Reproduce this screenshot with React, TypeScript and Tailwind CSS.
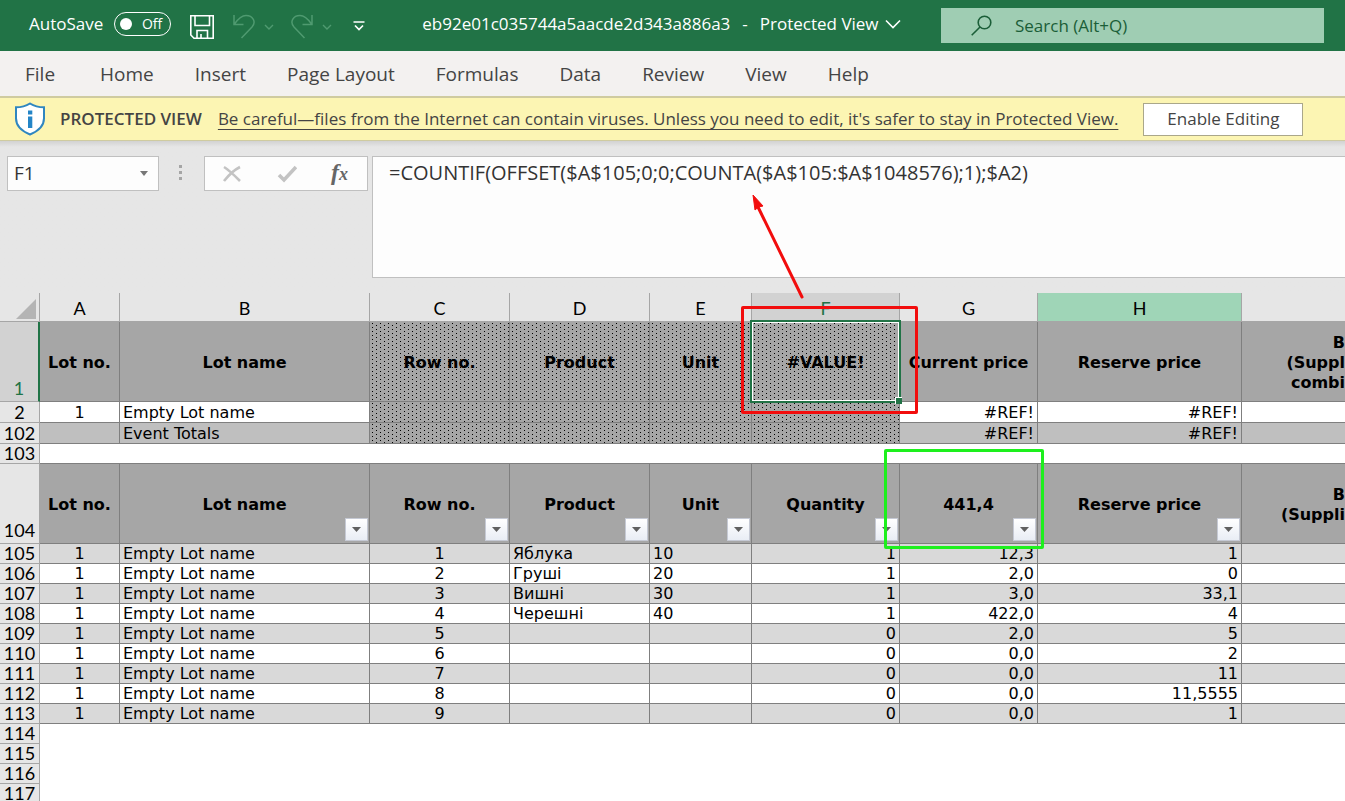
import type { ReactNode } from 'react';

type Align = 'left' | 'center' | 'right';

interface DataRow {
  row: number;
  rowNo: string;
  product: string;
  unit: string;
  quantity: string;
  current: string;
  reserve: string;
}

const tabs = ['Home', 'Insert', 'Page Layout', 'Formulas', 'Data', 'Review', 'View', 'Help'];

const columns = ['A', 'B', 'C', 'D', 'E', 'F', 'G', 'H', ''];

const dataRows: DataRow[] = [
  { row: 105, rowNo: '1', product: 'Яблука', unit: '10', quantity: '1', current: '12,3', reserve: '1' },
  { row: 106, rowNo: '2', product: 'Груші', unit: '20', quantity: '1', current: '2,0', reserve: '0' },
  { row: 107, rowNo: '3', product: 'Вишні', unit: '30', quantity: '1', current: '3,0', reserve: '33,1' },
  { row: 108, rowNo: '4', product: 'Черешні', unit: '40', quantity: '1', current: '422,0', reserve: '4' },
  { row: 109, rowNo: '5', product: '', unit: '', quantity: '0', current: '2,0', reserve: '5' },
  { row: 110, rowNo: '6', product: '', unit: '', quantity: '0', current: '0,0', reserve: '2' },
  { row: 111, rowNo: '7', product: '', unit: '', quantity: '0', current: '0,0', reserve: '11' },
  { row: 112, rowNo: '8', product: '', unit: '', quantity: '0', current: '0,0', reserve: '11,5555' },
  { row: 113, rowNo: '9', product: '', unit: '', quantity: '0', current: '0,0', reserve: '1' },
];

const emptyRows = [114, 115, 116, 117];

const alignClass: Record<Align, string> = {
  left: 'text-left pl-[3px]',
  center: 'text-center',
  right: 'text-right pr-[3px]',
};

function Chevron({ className }: { className?: string }) {
  return (
    <svg viewBox="0 0 10 6" className={className} fill="none" stroke="currentColor" strokeWidth="1.4" aria-hidden>
      <path d="M1 1l4 4 4-4" />
    </svg>
  );
}

function TitleBar() {
  return (
    <header className="flex h-[51px] items-center bg-[#217346] pr-[21px] pb-[3px] pl-[29px] text-white">
      <label className="flex items-center gap-[11px] text-[17px]">
        AutoSave
        <input type="checkbox" className="peer sr-only" />
        <span className="flex h-6 w-[57px] items-center justify-between rounded-full border border-white pr-2 pl-[5px] text-sm">
          <span className="size-3 rounded-full bg-white" />
          Off
        </span>
      </label>
      <button type="button" aria-label="Save" className="ml-[19px] pt-[6px]">
        <svg viewBox="0 0 24 24" className="size-6" fill="none" stroke="currentColor" strokeWidth="1.6" aria-hidden>
          <path d="M.8.8h22.4v22.4H4L.8 20z" />
          <path d="M5 1v9.500h14.500V1M7 23v-7.500h10.500V23M11 23v-4" />
        </svg>
      </button>
      <button type="button" aria-label="Undo" className="ml-[18px] flex items-center gap-2 pt-[6px] text-[#4f9a70]">
        <svg viewBox="0 0 24 26" className="h-[26px] w-6" fill="none" stroke="currentColor" strokeWidth="1.5" aria-hidden>
          <path d="M2 1v9.500h9.500M2.500 10C6 5 9 1.500 14 1.500c7 0 10.500 6.500 6 11.500L9.500 24" />
        </svg>
        <Chevron className="h-[6px] w-[10px]" />
      </button>
      <button type="button" aria-label="Redo" className="ml-4 flex items-center gap-2 pt-[6px] text-[#4f9a70]">
        <svg viewBox="0 0 24 26" className="h-[26px] w-6" fill="none" stroke="currentColor" strokeWidth="1.5" aria-hidden>
          <path d="M22 1v9.500h-9.500M21.500 10C18 5 15 1.500 10 1.500c-7 0-10.500 6.500-6 11.500L14.500 24" />
        </svg>
        <Chevron className="h-[6px] w-[10px]" />
      </button>
      <button type="button" aria-label="Customize Quick Access Toolbar" className="ml-[21px] pt-1">
        <svg viewBox="0 0 12 10" className="h-[10px] w-3" fill="none" stroke="currentColor" strokeWidth="1.7" aria-hidden>
          <path d="M.5 1h11M2 4.500l4 4 4-4" />
        </svg>
      </button>
      <h1 className="ml-[57px] flex items-center gap-3 text-[17px] whitespace-nowrap">
        <span>eb92e01c035744a5aacde2d343a886a3</span>
        <span>-</span>
        <span className="flex items-center gap-[6px]">
          Protected View
          <svg viewBox="0 0 16 10" className="h-[10px] w-4" fill="none" stroke="currentColor" strokeWidth="1.6" aria-hidden>
            <path d="M1 1.500l7 7 7-7" />
          </svg>
        </span>
      </h1>
      <label className="mt-[3px] ml-auto flex h-[35px] w-[383px] items-center bg-[#9fcdb3] pl-[30px] text-[#1b5e38]">
        <svg viewBox="0 0 22 22" className="size-[22px] shrink-0" fill="none" stroke="currentColor" strokeWidth="1.6" aria-hidden>
          <circle cx="13.5" cy="7.5" r="6.3" />
          <path d="M9 12l-8.300 8.300" />
        </svg>
        <input
          type="search"
          aria-label="Search"
          placeholder="Search (Alt+Q)"
          className="ml-[22px] w-full min-w-0 bg-transparent text-[17px] outline-none placeholder:text-[#1b5e38] placeholder:opacity-100"
        />
      </label>
    </header>
  );
}

function RibbonTabs() {
  return (
    <nav className="flex h-[45px] items-center bg-[#f3f1f0] px-[25px] pt-px text-[19px] text-[#444]" aria-label="Ribbon">
      <button type="button" className="mr-[45px]">
        File
      </button>
      <div className="flex gap-[41px]">
        {tabs.map((tab) => (
          <button key={tab} type="button" className="whitespace-nowrap">
            {tab}
          </button>
        ))}
      </div>
    </nav>
  );
}

function ProtectedBanner() {
  return (
    <div className="flex h-[45px] items-center border-t-2 border-b border-[#cfcba0] bg-[#fcf5b3] pl-[14px] text-[17px] text-[#444]">
      <svg viewBox="0 0 32 34" className="h-[34px] w-8 shrink-0" aria-hidden>
        <path
          d="M16 1.500c4 2.500 9 3.800 14 3.800v11c0 8-6 13-14 16.200C8 29.300 2 24.300 2 16.300v-11c5 0 10-1.300 14-3.800z"
          fill="#fff"
          stroke="#2f86c0"
          strokeWidth="2"
        />
        <path d="M14 8.500h4.300v4H14zM14 14.500h4.300V26H14z" fill="#2485c7" />
      </svg>
      <strong className="ml-[14px] font-semibold whitespace-nowrap">PROTECTED VIEW</strong>
      <a href="#protected-view" className="ml-4 whitespace-nowrap underline underline-offset-4">
        Be careful—files from the Internet can contain viruses. Unless you need to edit, it's safer to stay in Protected View.
      </a>
      <button type="button" className="ml-[25px] h-[33px] w-40 shrink-0 border border-[#aaa78a] bg-white">
        Enable Editing
      </button>
    </div>
  );
}

function FormulaBar() {
  return (
    <section
      className="flex h-[152px] items-start bg-linear-to-b from-[#d2d2d2] to-[#e6e6e6] to-[6px] pt-[15px] pl-[7px] text-[#333]"
      aria-label="Formula bar"
    >
      <div className="flex h-[35px] w-[152px] items-center border border-[#c0c0c0] bg-[#fdfdfd]">
        <input
          aria-label="Name box"
          defaultValue="F1"
          className="w-full min-w-0 bg-transparent pl-[6px] text-[19px] outline-none"
        />
        <button type="button" aria-label="Open name list" className="px-[10px] text-[#777]">
          <svg viewBox="0 0 8 5" className="h-[5px] w-2" fill="currentColor" aria-hidden>
            <path d="M0 0h8L4 5z" />
          </svg>
        </button>
      </div>
      <svg viewBox="0 0 4 16" className="mt-[9px] ml-5 h-4 w-1 text-[#a5a5a5]" fill="currentColor" aria-hidden>
        <path d="M0 0h3v3H0zM0 6h3v3H0zM0 12h3v3H0z" />
      </svg>
      <div className="ml-[21px] flex h-[35px] w-[164px] items-center justify-between border border-[#c0c0c0] bg-[#fdfdfd] pr-[19px] pl-[17px]">
        <button type="button" aria-label="Cancel">
          <svg viewBox="0 0 20 20" className="size-5 text-[#c3c3c3]" fill="none" stroke="currentColor" strokeWidth="2.6" aria-hidden>
            <path d="M2 3c5 3 11 9 16 14M18 3C12 6 6 12 2 17" />
          </svg>
        </button>
        <button type="button" aria-label="Enter">
          <svg viewBox="0 0 20 20" className="size-5 text-[#c3c3c3]" fill="none" stroke="currentColor" strokeWidth="3.6" aria-hidden>
            <path d="M2 11l5 5L19 3" />
          </svg>
        </button>
        <button
          type="button"
          aria-label="Insert function"
          className="pb-[3px] font-['Liberation_Serif',serif] text-[24px] leading-none font-bold text-[#666] italic"
        >
          f<span className="text-[18px]">x</span>
        </button>
      </div>
      <textarea
        aria-label="Formula"
        spellCheck={false}
        defaultValue="=COUNTIF(OFFSET($A$105;0;0;COUNTA($A$105:$A$1048576);1);$A2)"
        className="ml-1 h-[122px] min-w-0 flex-1 resize-none overflow-hidden border border-r-0 border-[#c0c0c0] bg-[#fdfdfd] px-4 pt-[2px] text-[20px] leading-7 outline-none"
      />
    </section>
  );
}

interface CellProps {
  align?: Align;
  children?: ReactNode;
}

function Cell({ align = 'left', children }: CellProps) {
  return (
    <td
      className={`overflow-hidden border-r border-b border-[#7f7f7f] py-0 pt-px whitespace-nowrap last:border-r-0 ${alignClass[align]}`}
    >
      {children}
    </td>
  );
}

function RowHead({ row, active }: { row: number; active?: boolean }) {
  const tall = row === 1 || row === 104;

  return (
    <th
      scope="row"
      className={`border-b px-0 pt-0 text-center align-bottom font-['Lato',sans-serif] text-[18px] leading-[18px] font-normal ${
        active
          ? 'border-r-2 border-r-[#217346] border-b-[#a6a6a6] bg-[#d2d2d2] text-[#217346]'
          : 'border-r border-[#a6a6a6] bg-[#e6e6e6]'
      } ${tall ? 'pb-1' : 'pb-px'}`}
    >
      {row}
    </th>
  );
}

interface HeadCellProps {
  filter?: boolean;
  dotted?: boolean;
  className?: string;
  children?: ReactNode;
}

function HeadCell({ filter, dotted, className = '', children }: HeadCellProps) {
  return (
    <td
      className={`relative border-r border-b border-[#7f7f7f] bg-[#a6a6a6] px-0 pt-[2px] pb-0 text-center leading-5 font-bold whitespace-nowrap last:border-r-0 ${className}`}
    >
      {dotted && <Dots />}
      {children}
      {filter && (
        <button
          type="button"
          aria-label="Filter"
          className="absolute right-px bottom-[2px] flex size-[23px] items-center justify-center border border-[#c5c9d4] bg-linear-to-b from-white to-[#e9edf5] text-[#606060]"
        >
          <svg viewBox="0 0 9 5" className="h-[5px] w-[9px]" fill="currentColor" aria-hidden>
            <path d="M0 0h9L4.500 5z" />
          </svg>
        </button>
      )}
    </td>
  );
}

function Dots() {
  return (
    <svg className="absolute inset-0 size-full" aria-hidden>
      <rect width="100%" height="100%" fill="url(#dots)" />
    </svg>
  );
}

function DottedCell() {
  return (
    <td className="relative border-r border-b border-[#7f7f7f] bg-[#a6a6a6] p-0">
      <Dots />
    </td>
  );
}

/** Selection frame of the active cell with the red callout drawn round it. */
function ActiveFrame() {
  return (
    <>
      <span className="absolute -inset-[2px] z-10 border-2 border-[#217346]">
        <span className="absolute inset-0 border border-white" />
        <span className="absolute -right-[3px] -bottom-[3px] size-[7px] border-t border-l border-white bg-[#217346]" />
      </span>
      <span className="absolute -top-4 -right-[19px] -bottom-[13px] -left-[11px] z-20 rounded-xs border-3 border-[#f20d0d]" />
      <svg viewBox="0 0 60 110" className="absolute bottom-[100px] left-0 z-20 h-[110px] w-[60px]" aria-hidden>
        <path d="M50 106L6 16" stroke="#f20d0d" strokeWidth="3" strokeLinecap="round" />
        <path d="M1 4l10 11-4.500 1L3 19z" fill="#f20d0d" stroke="#f20d0d" />
      </svg>
    </>
  );
}

function Sheet() {
  return (
    <table className="w-full table-fixed border-separate border-spacing-0 bg-white font-['DejaVu_Sans',sans-serif] text-[16px] leading-[18px] text-black">
      <colgroup>
        <col className="w-10" />
        <col className="w-20" />
        <col className="w-[250px]" />
        <col className="w-[140px]" />
        <col className="w-[140px]" />
        <col className="w-[102px]" />
        <col className="w-[148px]" />
        <col className="w-[138px]" />
        <col className="w-[204px]" />
        <col />
      </colgroup>
      <thead>
        <tr className="h-[29px]">
          <th className="border-r border-b border-[#a6a6a6] bg-[#e6e6e6] p-0">
            <svg viewBox="0 0 20 20" className="mt-1 ml-4 size-5" fill="#b4b4b4" aria-hidden>
              <path d="M20 0v20H0z" />
            </svg>
          </th>
          {columns.map((col, i) => (
            <th
              key={i}
              scope="col"
              className={`border-r border-b border-[#a6a6a6] px-0 pt-[2px] pb-0 font-['Lato',sans-serif] text-[18px] font-normal last:border-r-0 ${
                col === 'F' ? 'bg-[#d2d2d2] text-[#217346]' : col === 'H' ? 'bg-[#9fd5b7]' : 'bg-[#e6e6e6]'
              }`}
            >
              {col}
            </th>
          ))}
        </tr>
      </thead>
      <tbody>
        <tr className="h-20">
          <RowHead row={1} active />
          <HeadCell>Lot no.</HeadCell>
          <HeadCell>Lot name</HeadCell>
          <HeadCell dotted>Row no.</HeadCell>
          <HeadCell dotted>Product</HeadCell>
          <HeadCell dotted>Unit</HeadCell>
          <HeadCell dotted>
            #VALUE!
            <ActiveFrame />
          </HeadCell>
          <HeadCell>Current price</HeadCell>
          <HeadCell>Reserve price</HeadCell>
          <HeadCell className="text-right">
            B<br />
            (Suppl
            <br />
            combi
          </HeadCell>
        </tr>
        <tr className="h-[21px]">
          <RowHead row={2} />
          <Cell align="center">1</Cell>
          <Cell>Empty Lot name</Cell>
          <DottedCell />
          <DottedCell />
          <DottedCell />
          <DottedCell />
          <Cell align="right">#REF!</Cell>
          <Cell align="right">#REF!</Cell>
          <Cell />
        </tr>
        <tr className="h-[21px] bg-[#bfbfbf]">
          <RowHead row={102} />
          <Cell />
          <Cell>Event Totals</Cell>
          <DottedCell />
          <DottedCell />
          <DottedCell />
          <DottedCell />
          <Cell align="right">#REF!</Cell>
          <Cell align="right">#REF!</Cell>
          <Cell />
        </tr>
        <tr className="h-5">
          <RowHead row={103} />
          <td colSpan={9} className="border-b border-[#7f7f7f] p-0" />
        </tr>
        <tr className="h-20">
          <RowHead row={104} />
          <HeadCell>Lot no.</HeadCell>
          <HeadCell filter>Lot name</HeadCell>
          <HeadCell filter>Row no.</HeadCell>
          <HeadCell filter>Product</HeadCell>
          <HeadCell filter>Unit</HeadCell>
          <HeadCell filter>Quantity</HeadCell>
          <HeadCell filter>
            441,4
            <span className="absolute -top-[15px] -right-[7px] -bottom-[6px] -left-4 z-10 rounded-xs border-3 border-[#1df01d]" />
          </HeadCell>
          <HeadCell filter>Reserve price</HeadCell>
          <HeadCell className="text-right">
            B<br />
            (Suppli
          </HeadCell>
        </tr>
        {dataRows.map((item) => (
          <tr key={item.row} className="h-5 odd:bg-white even:bg-[#d9d9d9]">
            <RowHead row={item.row} />
            <Cell align="center">1</Cell>
            <Cell>Empty Lot name</Cell>
            <Cell align="center">{item.rowNo}</Cell>
            <Cell>{item.product}</Cell>
            <Cell>{item.unit}</Cell>
            <Cell align="right">{item.quantity}</Cell>
            <Cell align="right">{item.current}</Cell>
            <Cell align="right">{item.reserve}</Cell>
            <Cell />
          </tr>
        ))}
        {emptyRows.map((row) => (
          <tr key={row} className="h-5">
            <RowHead row={row} />
            <td colSpan={9} className="p-0" />
          </tr>
        ))}
      </tbody>
    </table>
  );
}

export default function App() {
  return (
    <div className="h-screen overflow-hidden bg-white font-['Open_Sans',sans-serif]">
      <svg className="absolute size-0" aria-hidden>
        <defs>
          <pattern id="dots" width="8" height="4" patternUnits="userSpaceOnUse">
            <path d="M2 1h1v1H2zM6 3h1v1H6z" fill="#000" />
          </pattern>
        </defs>
      </svg>
      <TitleBar />
      <RibbonTabs />
      <ProtectedBanner />
      <FormulaBar />
      <Sheet />
    </div>
  );
}
